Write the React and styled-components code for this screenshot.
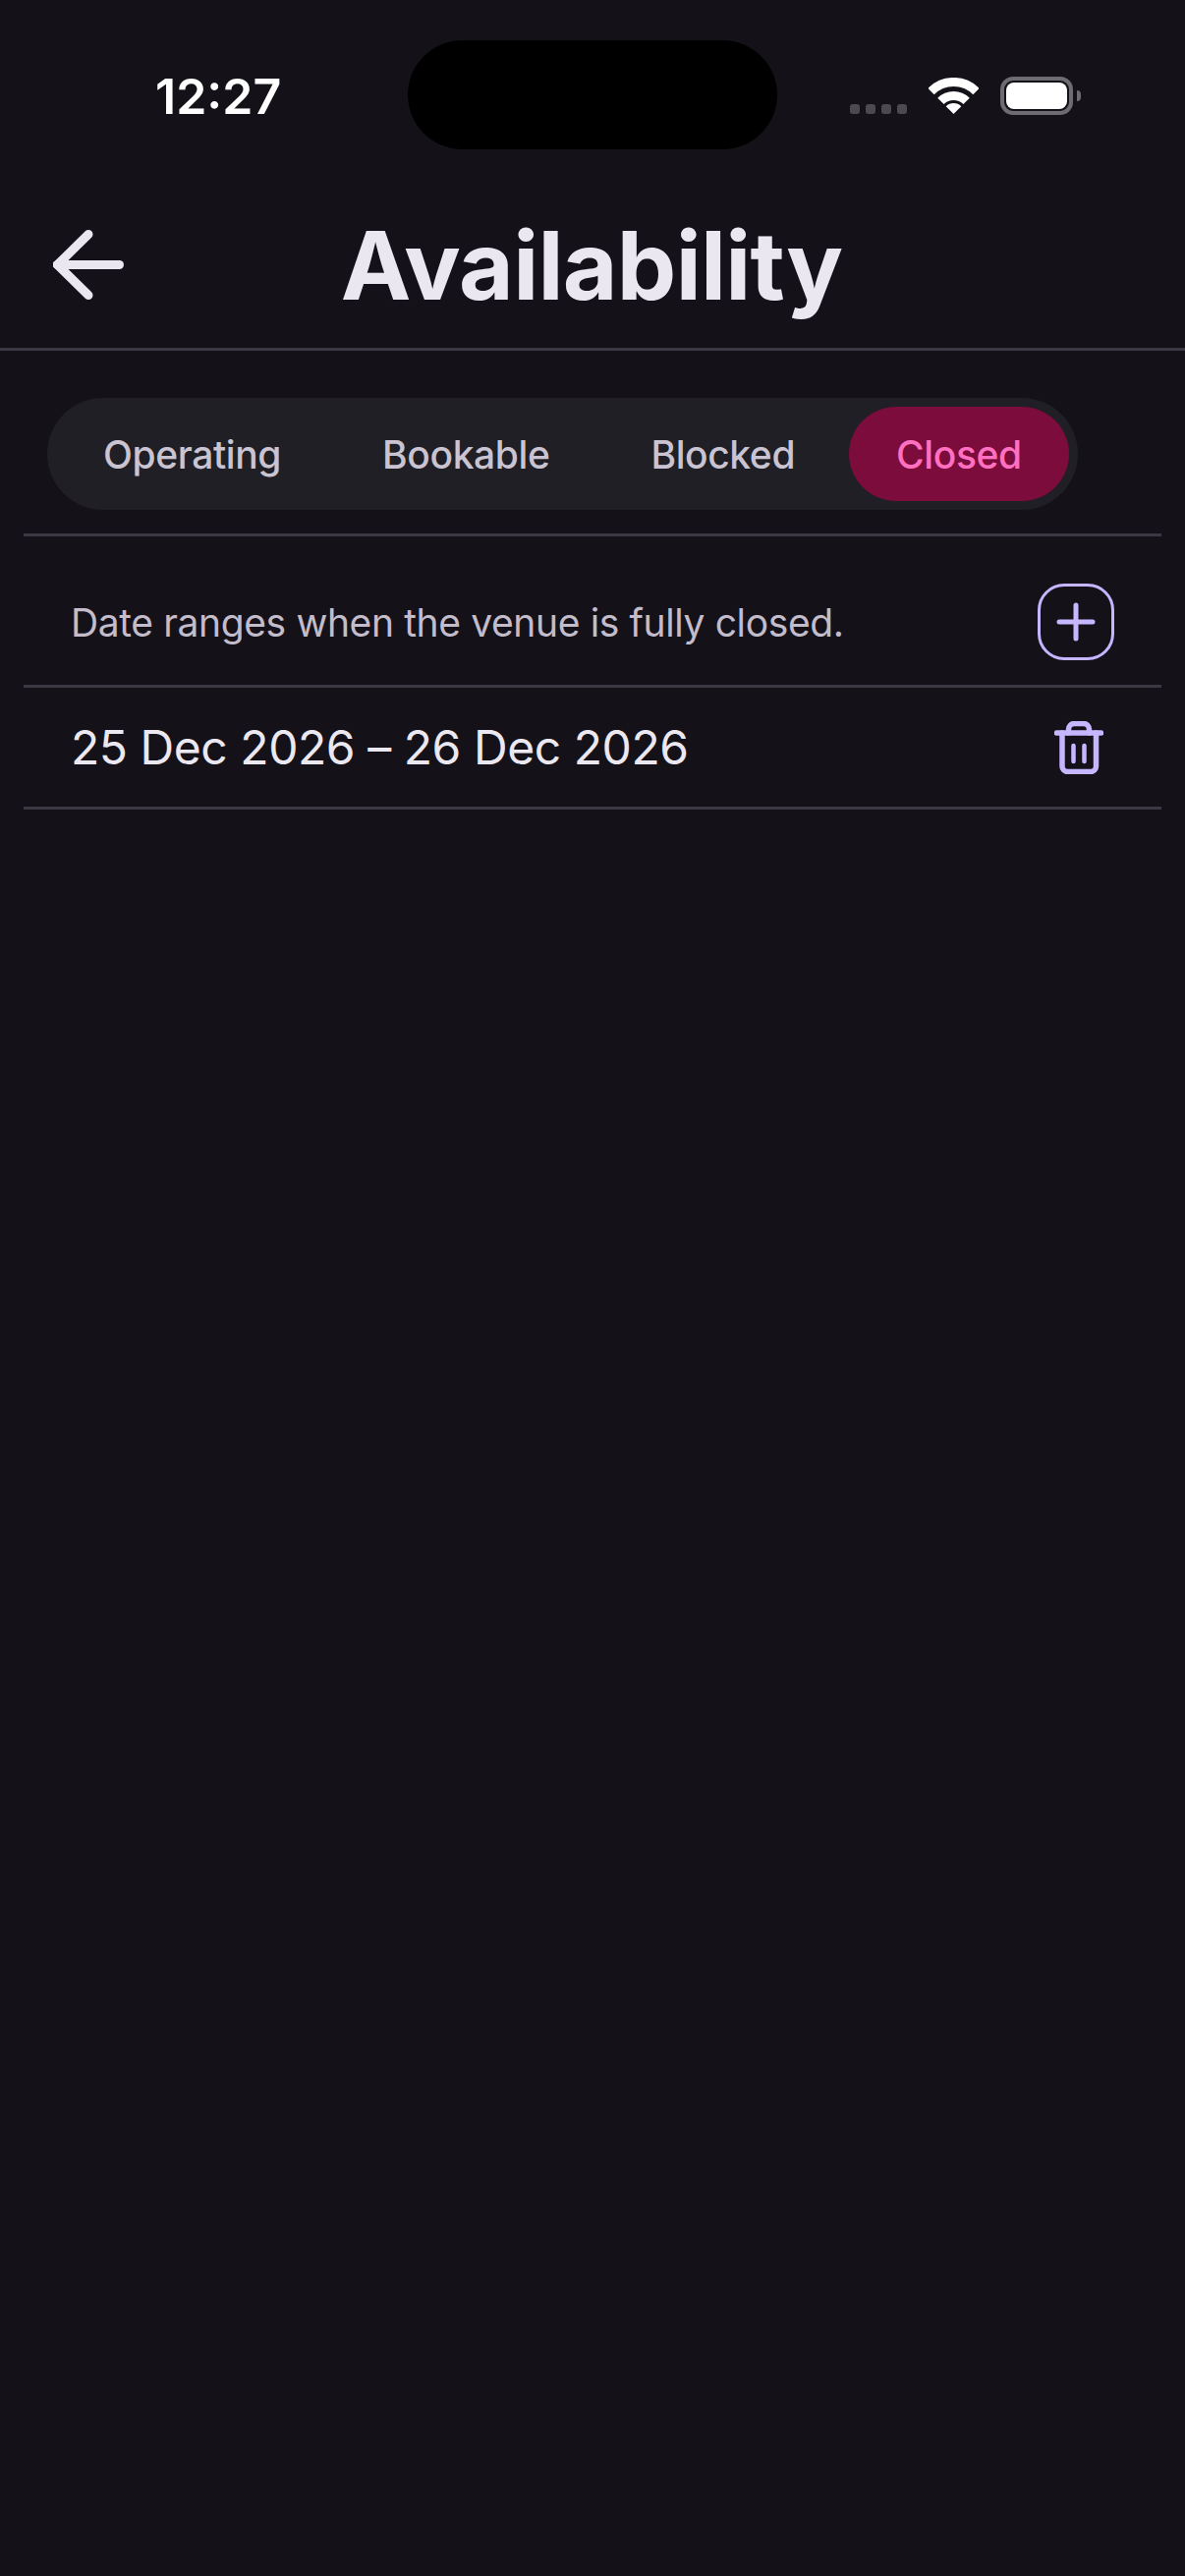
import React from "react";
import styled, { createGlobalStyle } from "styled-components";

const Global = createGlobalStyle`
  html, body { margin: 0; padding: 0; background: #141218; }
  * { box-sizing: border-box; }
  #root { min-height: 2622px; }
`;

const Page = styled.div`
  width: 1206px;
  min-height: 2622px;
  background: #141218;
  font-family: Inter, "Noto Sans", sans-serif;
  display: flex;
  flex-direction: column;
`;

const StatusBar = styled.div`
  display: grid;
  grid-template-columns: 415px 376px 1fr;
  height: 152px;
  padding-top: 41px;
`;

const Time = styled.div`
  padding-left: 158px;
  padding-top: 30px;
  font-size: 50px;
  line-height: 54px;
  font-weight: 600;
  color: #fff;
`;

const Island = styled.div`
  height: 111px;
  border-radius: 56px;
  background: #000;
`;

const StatusIcons = styled.div`
  display: flex;
  align-items: flex-start;
  padding-left: 74px;
  padding-top: 37px;
`;

const Dots = styled.div`
  display: flex;
  gap: 6px;
  margin-top: 28px;
  width: 80px;
`;

const Dot = styled.span`
  width: 10px;
  height: 10px;
  border-radius: 3px;
  background: #4b4a50;
`;

const Wifi = styled.svg`
  width: 51px;
  height: 37px;
  margin-top: 1px;
`;

const Battery = styled.div`
  position: relative;
  width: 74px;
  height: 39px;
  margin-left: 22px;
  border: 4px solid #6d6c72;
  border-radius: 13px;
  padding: 2px;
  &::before {
    content: "";
    display: block;
    height: 100%;
    border-radius: 8px;
    background: #fff;
  }
  &::after {
    content: "";
    position: absolute;
    left: 74px;
    top: 10px;
    width: 4px;
    height: 11px;
    border-radius: 0 6px 6px 0;
    background: #6d6c72;
  }
`;

const Header = styled.header`
  display: grid;
  grid-template-columns: 1fr auto 1fr;
  align-items: center;
  height: 205px;
  padding: 0 54px 0;
  border-bottom: 3px solid #3b3843;
`;

const BackIcon = styled.svg`
  width: 72px;
  height: 71px;
  display: block;
  margin-top: 32px;
`;

const Title = styled.h1`
  margin: 34px 0 0 -2px;
  font-size: 96px;
  line-height: 116px;
  font-weight: 700;
  letter-spacing: -0.7px;
  color: #ebe7f0;
`;

const TabsWrap = styled.div`
  padding: 48px 48px 0;
  display: flex;
`;

const Tabs = styled.div`
  display: flex;
  gap: 7px;
  padding: 9px;
  background: #1f1f25;
  border-radius: 57px;
`;

const Tab = styled.div`
  height: 96px;
  padding: 0 48px;
  display: flex;
  align-items: center;
  border-radius: 48px;
  font-size: 39px;
  font-weight: 500;
  letter-spacing: -0.4px;
  color: ${(p) => (p.$active ? "#ff70c0" : "#c9c3d2")};
  background: ${(p) => (p.$active ? "#7b0c3c" : "transparent")};
`;

const Content = styled.div`
  margin: 24px 24px 0;
  border-top: 3px solid #3b3843;
`;

const Row = styled.div`
  display: flex;
  align-items: center;
  justify-content: space-between;
  height: ${(p) => p.$h}px;
  padding: ${(p) => p.$top || 0}px 49px 0 48px;
  border-bottom: 3px solid #3b3843;
`;

const Hint = styled.p`
  margin: 0;
  font-size: 39px;
  font-weight: 400;
  letter-spacing: -0.38px;
  color: #c2bccb;
`;

const DateText = styled.div`
  font-size: 48px;
  font-weight: 400;
  letter-spacing: -0.45px;
  color: #ece8f1;
`;

const AddButton = styled.button`
  width: 78px;
  height: 78px;
  margin-right: -1px;
  padding: 0;
  display: flex;
  align-items: center;
  justify-content: center;
  background: transparent;
  border: 3px solid #c6b6ff;
  border-radius: 27px;
`;

const PlusIcon = styled.svg`
  width: 40px;
  height: 40px;
`;

const TrashIcon = styled.svg`
  width: 50px;
  height: 54px;
  margin-right: 10px;
`;

export default function App() {
  return (
    <Page>
      <Global />
      <StatusBar>
        <Time>12:27</Time>
        <Island />
        <StatusIcons>
          <Dots>
            <Dot /><Dot /><Dot /><Dot />
          </Dots>
          <Wifi viewBox="0 0 51 37" fill="none" stroke="#fff">
            <path d="M2.5 14A32.5 32.5 0 0 1 48.5 14" strokeWidth="9" />
            <path d="M12.4 23.9A18.5 18.5 0 0 1 38.6 23.9" strokeWidth="9" />
            <path d="M25.5 37L17.7 29.2A11 11 0 0 1 33.3 29.2Z" fill="#fff" stroke="none" />
          </Wifi>
          <Battery />
        </StatusIcons>
      </StatusBar>
      <Header>
        <BackIcon viewBox="0 0 72 71" fill="none" stroke="#ebe7f0" strokeWidth="9" strokeLinecap="round">
          <path d="M36 4.500L4.500 35.500L36 66.500" />
          <path d="M4.500 35.500H67.500" />
        </BackIcon>
        <Title>Availability</Title>
        <span />
      </Header>
      <TabsWrap>
        <Tabs>
          <Tab>Operating</Tab>
          <Tab>Bookable</Tab>
          <Tab>Blocked</Tab>
          <Tab $active>Closed</Tab>
        </Tabs>
      </TabsWrap>
      <Content>
        <Row $h={154} $top={23}>
          <Hint>Date ranges when the venue is fully closed.</Hint>
          <AddButton aria-label="Add">
            <PlusIcon viewBox="0 0 40 40" fill="none" stroke="#c6b6ff" strokeWidth="5" strokeLinecap="round">
              <path d="M3 20H37M20 3V37" />
            </PlusIcon>
          </AddButton>
        </Row>
        <Row $h={124}>
          <DateText>25 Dec 2026 – 26 Dec 2026</DateText>
          <TrashIcon viewBox="0 0 50 54" fill="none" stroke="#c6b6ff" strokeWidth="5.500" strokeLinecap="round" strokeLinejoin="round">
            <path d="M2.500 12H47.500" />
            <path d="M14.500 12V8.500a6 6 0 0 1 6-6h9a6 6 0 0 1 6 6V12" />
            <path d="M8 12V46a5.500 5.500 0 0 0 5.500 5.500H37a5.500 5.500 0 0 0 5.500-5.500V12" />
            <path d="M19.500 25V41M30.500 25V41" strokeWidth="4.500" />
          </TrashIcon>
        </Row>
      </Content>
    </Page>
  );
}
